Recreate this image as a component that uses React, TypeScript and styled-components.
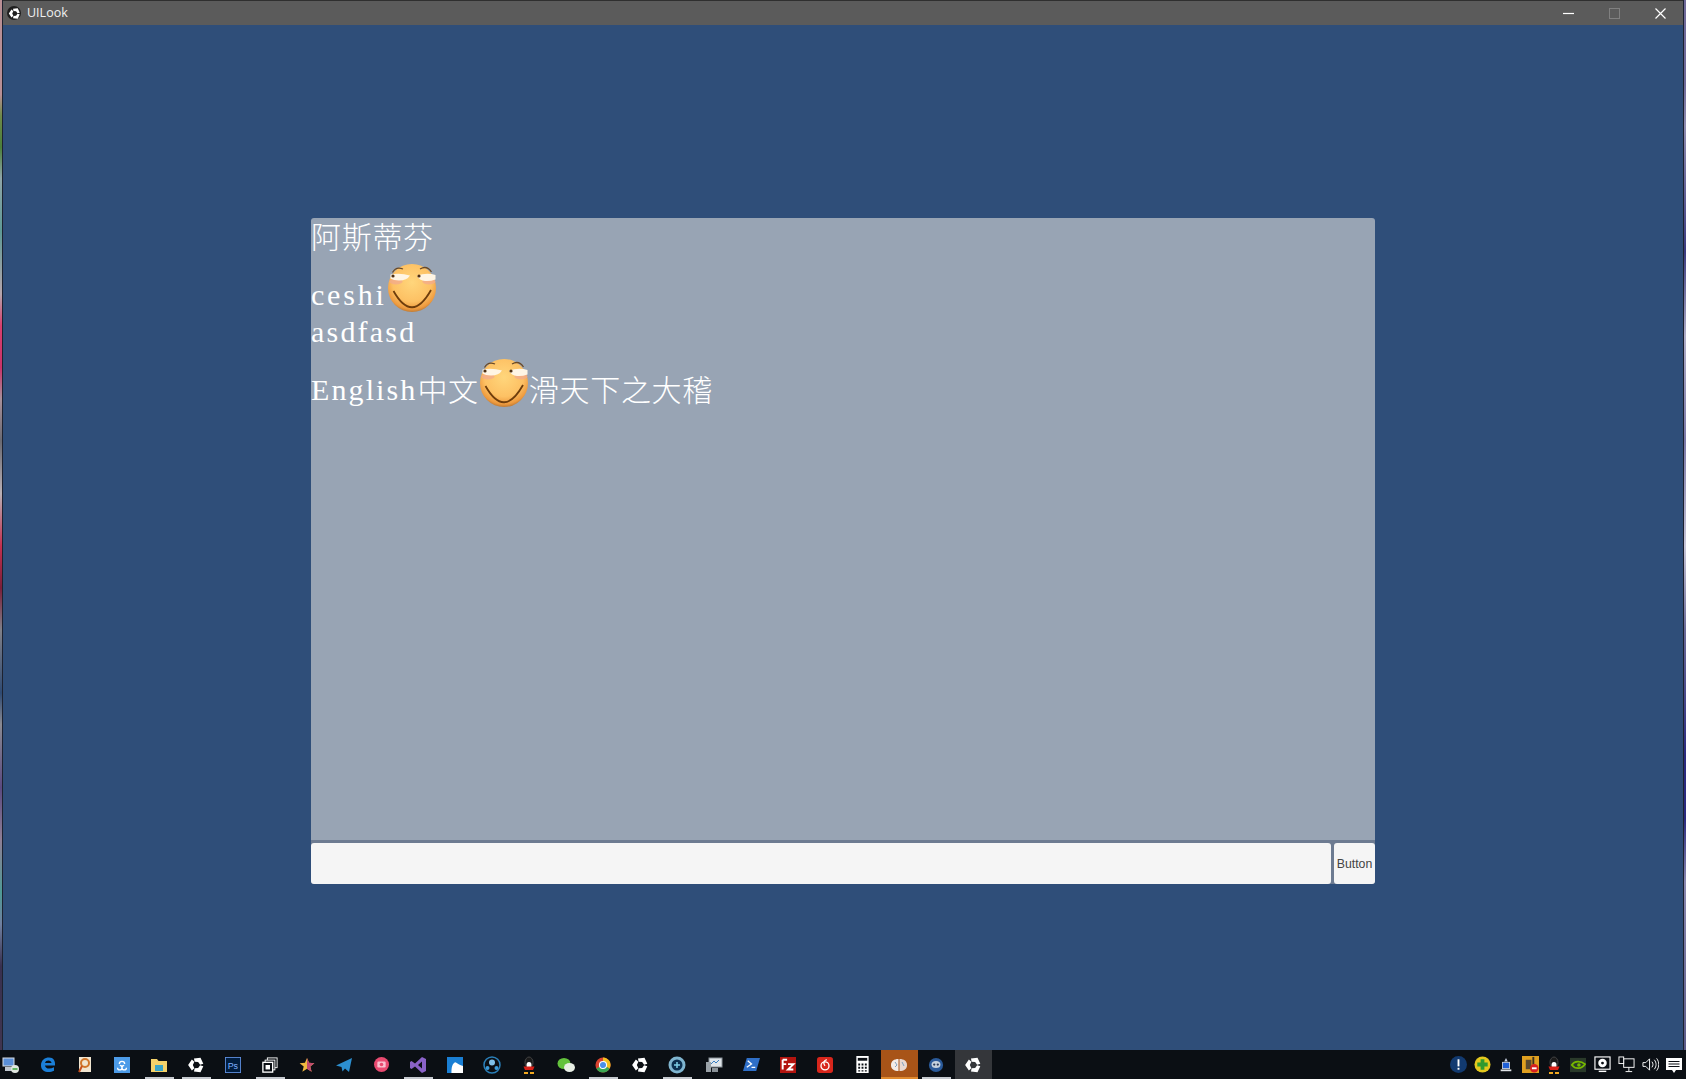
import React from "react";
import styled, { createGlobalStyle } from "styled-components";

const Global = createGlobalStyle`
  html, body { margin: 0; padding: 0; height: 100%; overflow: hidden; background: #0b0f14; }
  #root { height: 100%; }
`;

const Screen = styled.div`
  width: 1686px;
  height: 1079px;
  display: flex;
  flex-direction: column;
  font-family: "Open Sans", "Liberation Sans", sans-serif;
`;
const Desktop = styled.div`
  flex: 1;
  min-height: 0;
  display: flex;
`;
const LeftEdge = styled.div`
  width: 2px;
  border-right: 1px solid #1d2230;
  background: linear-gradient(
    to bottom,
    #b98f95 0 9%, #6f8a4a 11%, #4b7f3a 14%, #8fa5a8 17%, #5f9a95 22%, #b5a5ac 28%,
    #d8406f 31%, #c8336a 35%, #a8909a 38%, #6a6a72 42%, #b9b0b5 47%, #c23050 52%,
    #7a1f3a 56%, #808088 60%, #2f4a72 66%, #8a8a92 69%, #5b4a80 75%, #8f7f95 80%,
    #4f9a95 85%, #7080a0 88%, #38304f 92%, #40354f 100%
  );
`;
const RightEdge = styled.div`
  width: 2px;
  border-left: 1px solid #1d2230;
  background: linear-gradient(
    to bottom,
    #6f6a9a 0 8%, #8f8cb0 12%, #3a3a80 24%, #b0aec8 32%, #7a78a8 42%, #c8c6d8 52%,
    #6a6a98 60%, #2a2a80 72%, #2a2a80 78%, #8a88b0 84%, #5a5a88 100%
  );
`;
const Win = styled.div`
  flex: 1;
  min-width: 0;
  display: flex;
  flex-direction: column;
`;
const TitleBar = styled.div`
  height: 25px;
  flex: none;
  display: flex;
  align-items: center;
  background: #5b5b5b;
  border-top: 1px solid #2f2f2f;
  box-sizing: border-box;
  color: #f0f0f0;
`;
const TitleIcon = styled.span`
  width: 14px;
  height: 14px;
  margin-left: 4px;
  border-radius: 50%;
  background: #1e1e1e;
  color: #fff;
  display: flex;
  align-items: center;
  justify-content: center;
`;
const TitleText = styled.span`
  margin-left: 6px;
  font-size: 12.5px;
  line-height: 24px;
`;
const WinControls = styled.div`
  margin-left: auto;
  display: flex;
  align-items: center;
`;
const WinButton = styled.span`
  width: 46px;
  height: 24px;
  display: flex;
  align-items: center;
  justify-content: center;
`;
const Body = styled.div`
  flex: 1;
  min-height: 0;
  background: #2f4e79;
  padding: 193px 0 0 308px;
`;
const ChatBox = styled.div`
  width: 1064px;
  display: flex;
  flex-direction: column;
`;
const Messages = styled.div`
  height: 622px;
  background: #98a4b4;
  border-radius: 3px 3px 0 0;
  color: #fff;
`;
const Line = styled.div<{ $h: number }>`
  height: ${(p) => p.$h}px;
  white-space: nowrap;
  display: flex;
  align-items: flex-end;
`;
const Latin = styled.span<{ $ls: number }>`
  font-family: "Liberation Serif", serif;
  font-size: 30px;
  line-height: 36px;
  margin-bottom: -5px;
  letter-spacing: ${(p) => p.$ls}px;
`;
const Cjk = styled.span`
  font-family: "Noto Sans CJK SC", "Noto Sans CJK JP", sans-serif;
  font-weight: 300;
  font-size: 30px;
  letter-spacing: 0.7px;
  line-height: 30px;
`;
const InputRow = styled.div`
  display: flex;
  gap: 3px;
  padding-top: 3px;
  background: #6d7b91;
  border-radius: 0 0 3px 3px;
`;
const TextInput = styled.input`
  flex: 1;
  min-width: 0;
  height: 41px;
  box-sizing: border-box;
  border: none;
  outline: none;
  padding: 0 6px;
  background: #f5f5f5;
  border-radius: 3px;
`;
const SendButton = styled.button`
  width: 41px;
  height: 41px;
  flex: none;
  padding: 0;
  border: none;
  background: #f5f5f5;
  border-radius: 3px;
  color: #444;
  font-family: "Liberation Sans", sans-serif;
  font-size: 12.3px;
`;
const Taskbar = styled.div`
  height: 29px;
  flex: none;
  display: flex;
  align-items: stretch;
  background: #0b0f14;
`;
const TaskCell = styled.div<{ $bg?: string; $bar?: string }>`
  width: 37px;
  flex: none;
  position: relative;
  display: flex;
  align-items: center;
  justify-content: center;
  background: ${(p) => p.$bg ?? "transparent"};
  color: #fff;
  &:first-child {
    width: 29.5px;
    justify-content: flex-start;
    padding-left: 2px;
    box-sizing: border-box;
  }
  &::after {
    content: "";
    display: ${(p) => (p.$bar ? "block" : "none")};
    position: absolute;
    bottom: 0;
    left: ${(p) => (p.$bg ? 0 : 4)}px;
    right: ${(p) => (p.$bg ? 0 : 4)}px;
    height: 2px;
    background: ${(p) => p.$bar};
  }
`;
const Tray = styled.div`
  margin-left: auto;
  display: flex;
`;
const TrayCell = styled.div`
  width: 24px;
  display: flex;
  align-items: center;
  justify-content: center;
`;

const Smiley = styled.svg`
  width: 48px;
  height: 48px;
  flex: none;
  display: block;
  margin: 0 1px -4px;
`;

const Face: React.FC = () => (
  <Smiley viewBox="0 0 48 48">
    <defs>
      <radialGradient id="faceFill" cx="0.5" cy="0.38" r="0.65">
        <stop offset="0" stopColor="#ffd67c" />
        <stop offset="0.62" stopColor="#fdc164" />
        <stop offset="0.86" stopColor="#ee9a3e" />
        <stop offset="1" stopColor="#a86c30" />
      </radialGradient>
    </defs>
    <circle cx="24" cy="24" r="24" fill="url(#faceFill)" />
    <ellipse cx="8" cy="17.500" rx="6.500" ry="3" fill="#f2a98e" opacity=".75" />
    <ellipse cx="41" cy="17.500" rx="6.500" ry="3" fill="#f2a98e" opacity=".75" />
    <path d="M2.500 10.500 Q12 8.500 22 11.500 Q19 16.500 11 16.500 Q5.500 16.500 2.500 14.500Z" fill="#fff5e4" />
    <path d="M29 11.500 Q39 8.500 47.500 11 L47.500 15.500 Q42 17.500 37 17 Q31.500 16.500 29 11.500Z" fill="#fff5e4" />
    <circle cx="5" cy="12" r="1.600" fill="#4f2f12" />
    <circle cx="31" cy="12" r="1.600" fill="#4f2f12" />
    <path d="M4.500 8.500 Q8 2 15 5 M32 5 Q39 1 43.500 8" stroke="#6a4a28" strokeWidth="1.300" fill="none" />
    <path d="M5.500 27 Q24 60 43 26" stroke="#6e3d0c" strokeWidth="1.800" fill="none" />
  </Smiley>
);

const Svg18: React.FC<{ children: React.ReactNode; size?: number }> = ({ children, size = 18 }) => (
  <svg width={size} height={size} viewBox="0 0 18 18">{children}</svg>
);

const UNITY_ARM = "M1.500 12 L6.500 4.800 L9.800 7.800 L7.800 12 L9.800 16.200 L6.500 19.200Z";
const UnityMark: React.FC<{ size?: number }> = ({ size = 18 }) => (
  <svg width={size} height={size} viewBox="0 0 24 24" fill="currentColor">
    <path d={UNITY_ARM} />
    <path d={UNITY_ARM} transform="rotate(120 12.500 12)" />
    <path d={UNITY_ARM} transform="rotate(240 12.500 12)" />
  </svg>
);

const taskIcons: { icon: React.ReactNode; bar?: string; bg?: string }[] = [
  { icon: <Svg18><rect x="1" y="2" width="11" height="8" fill="#5a8fd8" stroke="#d8dde5" /><rect x="3" y="11" width="8" height="4" fill="#bfc6cf" /><circle cx="13" cy="13" r="4" fill="#e0e6e0" /><path d="M10.500 13h5" stroke="#3aa53a" strokeWidth="1.500" /></Svg18> },
  { icon: <Svg18><path d="M2 9.500C2 4 6 1.500 10 1.500c4.500 0 6.500 3.500 6 8H6c.3 3.500 5 4 9 1.800v3.500c-5 2.400-13 1.500-13-5.300zM6 7h6.500c0-3.200-5.800-3.500-6.500 0z" fill="#1b7fd8" /></Svg18> },
  { icon: <Svg18><rect x="3" y="1" width="12" height="15" fill="#f0e5d0" /><circle cx="9" cy="7" r="4" fill="none" stroke="#d0762a" strokeWidth="2" /><path d="M6 10l-3 6" stroke="#c8501e" strokeWidth="2" /></Svg18> },
  { icon: <Svg18 size={16}><rect width="18" height="18" fill="#4c9be8" /><path d="M4 12a2.500 2.500 0 1 0 2.500-2.500M9 5a3 3 0 0 1 3 3M14 12a2.500 2.500 0 1 1-2.500-2.500M9 5a3 3 0 0 0-3 3" stroke="#fff" strokeWidth="1.500" fill="none" /></Svg18> },
  { bar: "#c5c9cf", icon: <Svg18><path d="M1 3h6l1.500 2H17v11H1z" fill="#f4d26a" /><rect x="5" y="9" width="8" height="6" fill="#3aa5c8" /></Svg18> },
  { bar: "#c5c9cf", icon: <UnityMark /> },
  { icon: <Svg18 size={16}><rect x=".5" y=".5" width="17" height="17" fill="#001d3f" stroke="#5f8fe0" /><text x="3" y="13" fontSize="10" fill="#7fb0ff" fontFamily="Liberation Sans">Ps</text></Svg18> },
  { bar: "#c5c9cf", icon: <Svg18 size={16}><rect x="6" y="1" width="11" height="11" fill="none" stroke="#fff" /><rect x="3.500" y="3.500" width="11" height="11" fill="#0b0f14" stroke="#fff" /><rect x="1" y="6" width="11" height="11" fill="#0b0f14" stroke="#fff" strokeWidth="1.500" /><rect x="4" y="9" width="5" height="5" fill="#fff" /></Svg18> },
  { icon: <Svg18 size={16}><path d="M9 1l2.300 5.500 6 .4-4.600 3.800 1.500 5.800L9 13.300 3.800 16.500l1.500-5.800L.7 6.900l6-.4z" fill="#f0b840" /><path d="M9 1l2.300 5.500 6 .4-4.600 3.800 1.500 5.800L9 13.300z" fill="#c04a70" /></Svg18> },
  { icon: <Svg18><path d="M1 9.500L17 2l-3 14-4-3.500-2.500 3-1-4.500z" fill="#2c8fd0" /></Svg18> },
  { icon: <Svg18 size={15}><circle cx="9" cy="9" r="9" fill="#e84a70" /><rect x="4" y="5.500" width="10" height="7" rx="1.500" fill="#f8c0d0" /><circle cx="9" cy="9" r="2.200" fill="#e84a70" /></Svg18> },
  { bar: "#c5c9cf", icon: <Svg18><path d="M13 1l4 2v12l-4 2-7-6.500L2.500 13 1 12V6l1.500-1L6 7.500zM13 5.500L9 9l4 3.500z" fill="#8a62c8" fillRule="evenodd" /></Svg18> },
  { icon: <Svg18 size={16}><rect width="18" height="18" fill="#1a7fd4" /><path d="M5 18c0-7 1-10 4-12 3 1 4 3 9 4v8z" fill="#fff" /></Svg18> },
  { icon: <Svg18><circle cx="9" cy="9" r="8" fill="none" stroke="#2a7fb8" strokeWidth="1.500" /><circle cx="9" cy="6.500" r="3" fill="#7fc0e8" /><circle cx="4.500" cy="12" r="2" fill="#3a9ad8" /><circle cx="13.500" cy="12" r="2" fill="#3a9ad8" /></Svg18> },
  { icon: <Svg18><ellipse cx="9" cy="6.500" rx="4" ry="5.500" fill="#1a1a1a" stroke="#444" /><ellipse cx="9" cy="9" rx="2.500" ry="3" fill="#fff" /><path d="M3.500 10.500h11l-1.500 3.500H5z" fill="#d82018" /><path d="M4 17h4M10 17h4" stroke="#f0a820" strokeWidth="2" /></Svg18> },
  { icon: <Svg18><ellipse cx="7" cy="7.500" rx="6.500" ry="5.500" fill="#63c23c" /><ellipse cx="12.500" cy="11.500" rx="5.500" ry="4.500" fill="#e8efe5" /></Svg18> },
  { bar: "#c5c9cf", icon: <Svg18 size={16}><circle cx="9" cy="9" r="8.500" fill="#d8432f" /><path d="M9 .5a8.500 8.500 0 0 1 7.500 12.500L9 9z" fill="#f4c020" /><path d="M1.500 13a8.500 8.500 0 0 0 15 0L9 9z" fill="#3aa853" /><circle cx="9" cy="9" r="4" fill="#4a8fe8" stroke="#fff" strokeWidth="1.200" /></Svg18> },
  { icon: <UnityMark /> },
  { bar: "#c5c9cf", icon: <Svg18><circle cx="9" cy="9" r="8.500" fill="#7fb5d0" /><circle cx="9" cy="9" r="5.500" fill="#0b2f50" /><path d="M6 9h6M9 6v6" stroke="#7fd0e8" strokeWidth="1.500" /></Svg18> },
  { icon: <Svg18><rect x="4" y="2" width="13" height="9" fill="#dfe5ea" stroke="#8a9298" /><path d="M6 8l3-3 2 2 3-3" stroke="#3a7fc0" fill="none" /><rect x="1" y="6" width="5" height="10" fill="#9aa2a8" /><rect x="7" y="12" width="6" height="4" fill="#8a9298" /></Svg18> },
  { icon: <Svg18 size={17}><path d="M4 2h14l-4 14H0z" fill="#2f6fc8" /><path d="M5 5l4 3.500L4 12M9 12h4" stroke="#fff" strokeWidth="1.400" fill="none" /></Svg18> },
  { icon: <Svg18 size={16}><rect width="18" height="18" fill="#b3140f" /><path d="M3 3h5M3 3v11M3 8h4M9 8h6l-6 6h6" stroke="#fff" strokeWidth="2.200" fill="none" /></Svg18> },
  { icon: <Svg18 size={16}><rect width="18" height="18" rx="3" fill="#d8261c" /><circle cx="9" cy="10" r="4.500" fill="none" stroke="#fff" strokeWidth="1.500" /><path d="M11 3C7 4 7 8 9 10" stroke="#fff" strokeWidth="1.500" fill="none" /></Svg18> },
  { icon: <Svg18 size={17}><rect x="2.500" width="13" height="18" fill="#fff" /><rect x="4" y="2" width="10" height="3" fill="#0b0f14" /><path d="M4.500 8h2v2h-2zM8 8h2v2H8zM11.500 8h2v2h-2zM4.500 11.500h2v2h-2zM8 11.500h2v2H8zM11.500 11.500h2v2h-2zM4.500 15h2v1.500h-2zM8 15h2v1.500H8zM11.500 15h2v1.500h-2z" fill="#0b0f14" /></Svg18> },
  { bg: "#a85418", bar: "#e08a2e", icon: <Svg18><path d="M1 9c0-4 3-6 7.500-6v12C4 15 1 13 1 9z" fill="#f3ebe6" /><path d="M17 9c0-4-3-6-7.500-6v12C14 15 17 13 17 9z" fill="#e8d8d0" /><path d="M5 6l2 3-2 2M12 6l2 4" stroke="#7fa0c0" fill="none" /></Svg18> },
  { bar: "#c5c9cf", icon: <Svg18 size={16}><circle cx="9" cy="9" r="8" fill="#2a5a9a" /><ellipse cx="9" cy="8.500" rx="5" ry="4" fill="#c5d2df" /><circle cx="7" cy="8.500" r="1.300" fill="#2a3a5a" /><circle cx="11" cy="8.500" r="1.300" fill="#2a3a5a" /></Svg18> },
  { bg: "#34363a", icon: <UnityMark /> },
];

const trayIcons: React.ReactNode[] = [
  <Svg18 key="a" size={17}><circle cx="9" cy="9" r="9" fill="#123a70" /><rect x="8" y="3.500" width="2" height="7.500" fill="#fff" /><rect x="8" y="12.500" width="2" height="2" fill="#fff" /></Svg18>,
  <Svg18 key="b" size={17}><circle cx="9" cy="9" r="8.500" fill="#e4c81e" /><path d="M9 3.500v11M3.500 9h11" stroke="#2f9a2f" strokeWidth="4" /></Svg18>,
  <Svg18 key="c" size={16}><path d="M9 1l2 4H7z" fill="#c8d0e0" /><rect x="5" y="6" width="8" height="7" fill="#2060d8" stroke="#c8d0e0" /><rect x="3" y="14" width="12" height="2" fill="#e0e4e8" /></Svg18>,
  <Svg18 key="d" size={17}><rect width="18" height="18" fill="#e0a020" /><rect x="4" y="4" width="6" height="10" fill="#5a4a30" /><rect x="11" y="1" width="2" height="8" fill="#3a3020" /><circle cx="13" cy="13" r="4.500" fill="#d82020" /><rect x="10.500" y="12" width="5" height="2" fill="#fff" /></Svg18>,
  <Svg18 key="e"><ellipse cx="9" cy="6.500" rx="4" ry="5.500" fill="#1a1a1a" stroke="#444" /><ellipse cx="9" cy="9" rx="2.500" ry="3" fill="#fff" /><path d="M3.500 10.500h11l-1.500 3.500H5z" fill="#d82018" /><path d="M4 17h4M10 17h4" stroke="#f0a820" strokeWidth="2" /></Svg18>,
  <Svg18 key="f" size={16}><rect width="18" height="16" y="1" fill="#2a3a2a" /><path d="M2 9c3-5 10-5 15-1-4 6-11 6-15 1z" fill="none" stroke="#76b900" strokeWidth="2" /><circle cx="10" cy="9" r="2" fill="#76b900" /></Svg18>,
  <Svg18 key="g" size={17}><rect x="1" y="1" width="16" height="13" fill="none" stroke="#fff" strokeWidth="1.200" /><circle cx="9" cy="7.500" r="4.500" fill="#fff" /><circle cx="9" cy="7.500" r="1.500" fill="#0b0f14" /><rect x="5" y="15.500" width="8" height="1.500" fill="#fff" /></Svg18>,
  <Svg18 key="h" size={17}><rect x="6" y="3" width="11" height="9" fill="none" stroke="#fff" /><rect x="1" y="1" width="5" height="7" fill="#0b0f14" stroke="#fff" /><path d="M11.500 12v4M8 16.500h7" stroke="#fff" /></Svg18>,
  <Svg18 key="i" size={17}><path d="M1 7h3l4-4v12l-4-4H1z" fill="none" stroke="#fff" /><path d="M10.500 6c1.500 2 1.500 4 0 6M13 4c2.500 3 2.500 7 0 10M15.500 2.500c3 4 3 9 0 13" fill="none" stroke="#fff" /></Svg18>,
  <Svg18 key="j"><path d="M1 2h16v12h-6l-2 3-2-3H1z" fill="#fff" /><path d="M3.500 5.500h11M3.500 8h11M3.500 10.500h11" stroke="#0b0f14" /></Svg18>,
];

export default function App() {
  return (
    <Screen>
      <Global />
      <Desktop>
        <LeftEdge />
        <Win>
          <TitleBar>
            <TitleIcon><UnityMark size={13} /></TitleIcon>
            <TitleText>UILook</TitleText>
            <WinControls>
              <WinButton>
                <svg width="11" height="11" viewBox="0 0 11 11"><path d="M0 5.500h11" stroke="#fff" strokeWidth="1.200" /></svg>
              </WinButton>
              <WinButton>
                <svg width="11" height="11" viewBox="0 0 11 11"><rect x=".5" y=".5" width="10" height="10" fill="none" stroke="#808080" /></svg>
              </WinButton>
              <WinButton>
                <svg width="11" height="11" viewBox="0 0 11 11"><path d="M.5.500l10 10M10.500.500l-10 10" stroke="#fff" strokeWidth="1.200" /></svg>
              </WinButton>
            </WinControls>
          </TitleBar>
          <Body>
            <ChatBox>
              <Messages>
                <Line $h={32}><Cjk>阿斯蒂芬</Cjk></Line>
                <Line $h={58}><Latin $ls={2.8}>ceshi</Latin><Face /></Line>
                <Line $h={37}><Latin $ls={2.2}>asdfasd</Latin></Line>
                <Line $h={58}>
                  <Latin $ls={2.1}>English</Latin>
                  <Cjk>中文</Cjk>
                  <Face />
                  <Cjk>滑天下之大稽</Cjk>
                </Line>
              </Messages>
              <InputRow>
                <TextInput />
                <SendButton>Button</SendButton>
              </InputRow>
            </ChatBox>
          </Body>
        </Win>
        <RightEdge />
      </Desktop>
      <Taskbar>
        {taskIcons.map((t, i) => (
          <TaskCell key={i} $bg={t.bg} $bar={t.bar}>{t.icon}</TaskCell>
        ))}
        <Tray>
          {trayIcons.map((ic, i) => (
            <TrayCell key={i}>{ic}</TrayCell>
          ))}
        </Tray>
      </Taskbar>
    </Screen>
  );
}
